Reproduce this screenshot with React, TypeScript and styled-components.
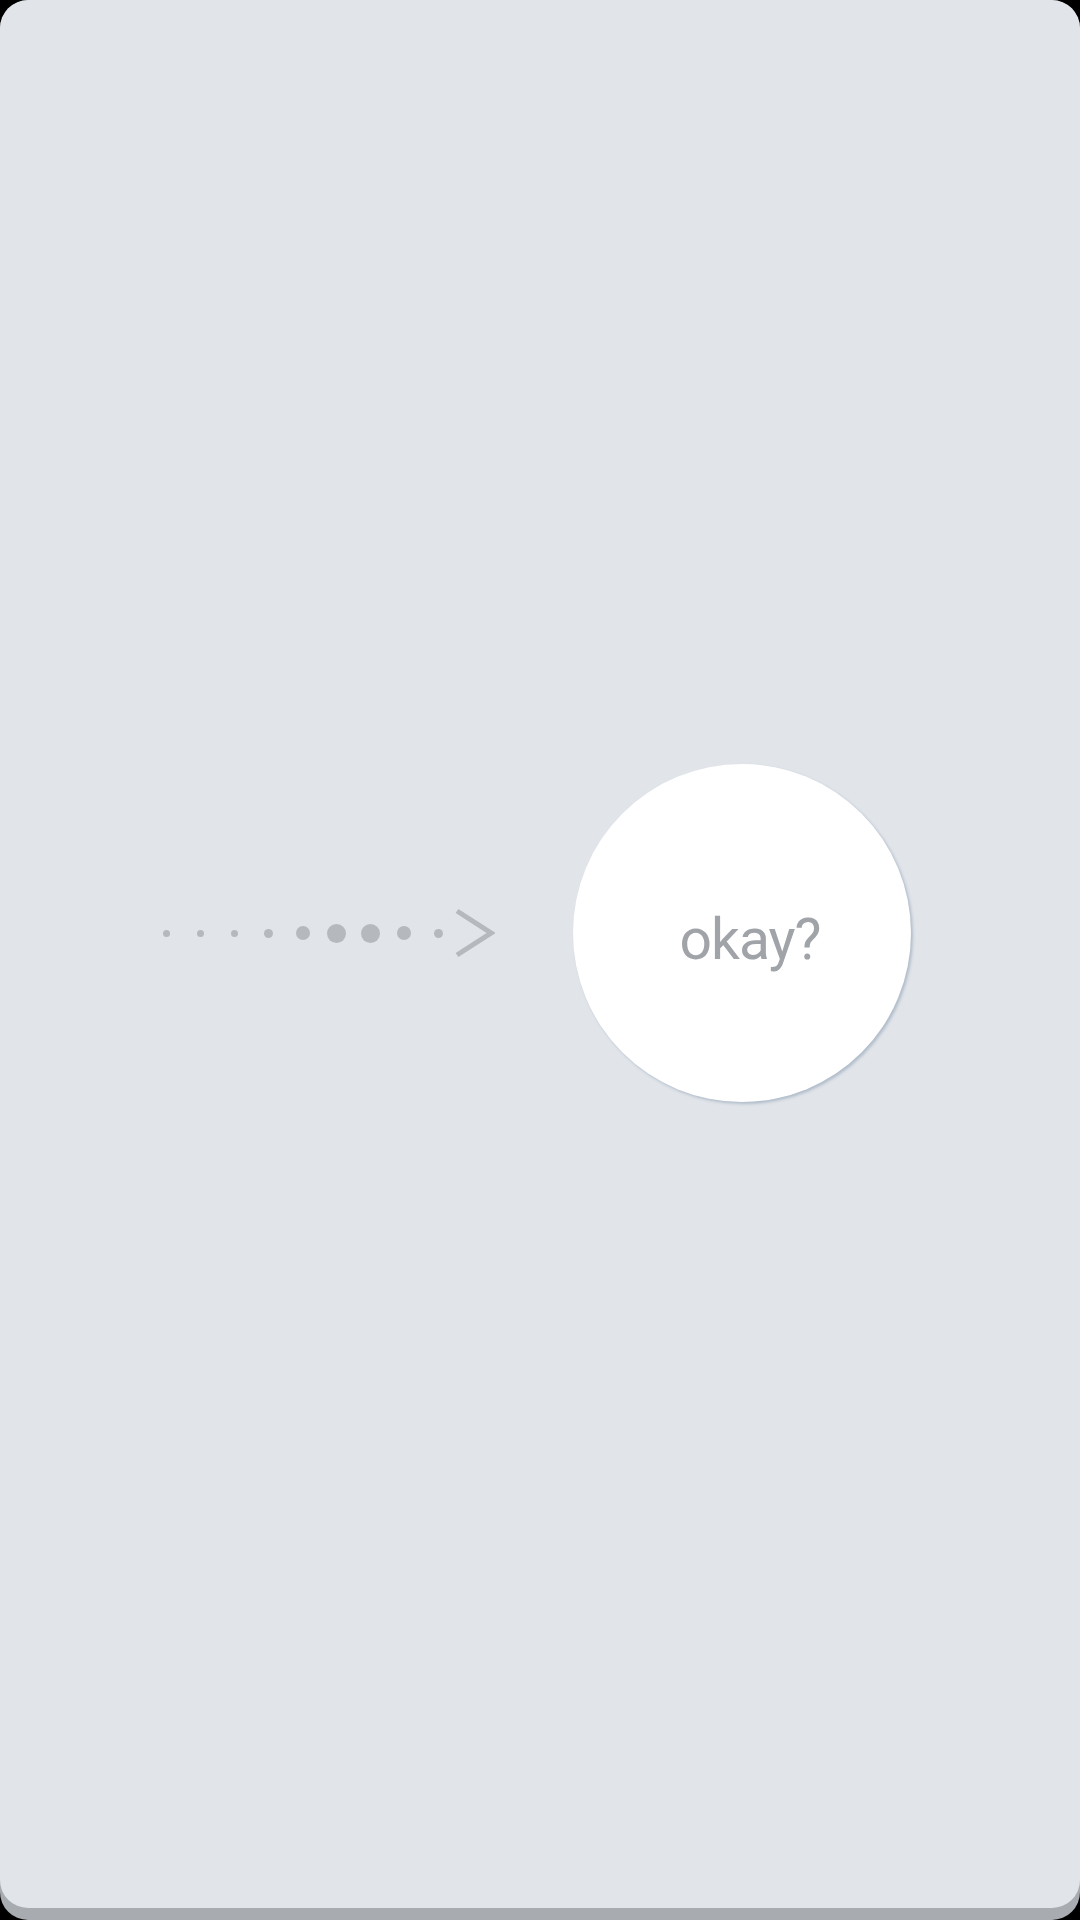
import styled, { createGlobalStyle } from 'styled-components'

const GlobalStyle = createGlobalStyle`
    html, body {
        margin: 0;
        padding: 0;
        background: #000;
    }
`

const Screen = styled.div`
    width: 1080px;
    height: 1920px;
    border-radius: 28px;
    background: #a8acb0;
    overflow: hidden;
    display: flex;
    flex-direction: column;
`

const Panel = styled.main`
    height: 1908px;
    flex: none;
    background: #e1e5ea;
    border-radius: 28px;
    padding-top: 764px;
    box-sizing: border-box;
`

const Row = styled.div`
    display: flex;
    align-items: center;
    padding-left: 150px;
`

const Dots = styled.div`
    display: flex;
    align-items: center;
`

const Cell = styled.span`
    width: 33.9px;
    height: 20px;
    display: flex;
    align-items: center;
    justify-content: center;
`

const Dot = styled.span<{ $size: number }>`
    width: ${p => p.$size}px;
    height: ${p => p.$size}px;
    border-radius: 50%;
    background: #b5b8bc;
`

const Arrow = styled.svg`
    width: 40px;
    height: 50px;
    flex: none;
`

const Bubble = styled.button`
    margin-left: 78px;
    width: 338px;
    height: 338px;
    flex: none;
    border: none;
    border-radius: 50%;
    background: #fff;
    box-shadow: 2px 2px 3px rgba(120, 140, 165, 0.45);
    display: flex;
    align-items: center;
    justify-content: center;
    padding: 12px 0 0 16px;
    font-family: Roboto, "Noto Sans", sans-serif;
    font-size: 57px;
    letter-spacing: -1px;
    color: #a0a3a7;
    cursor: pointer;
`

const sizes = [7, 7, 7, 9, 14, 19, 19, 14, 9]

const App = () => {
    return <>
        <GlobalStyle />
        <Screen>
            <Panel>
                <Row>
                    <Dots>
                        {sizes.map((s, i) => (
                            <Cell key={i}><Dot $size={s} /></Cell>
                        ))}
                    </Dots>
                    <Arrow viewBox="0 0 40 50">
                        <polyline points="2,3 36,25 2,47" fill="none" stroke="#b5b8bc" strokeWidth="5" />
                    </Arrow>
                    <Bubble>okay?</Bubble>
                </Row>
            </Panel>
        </Screen>
    </>
}

export default App
